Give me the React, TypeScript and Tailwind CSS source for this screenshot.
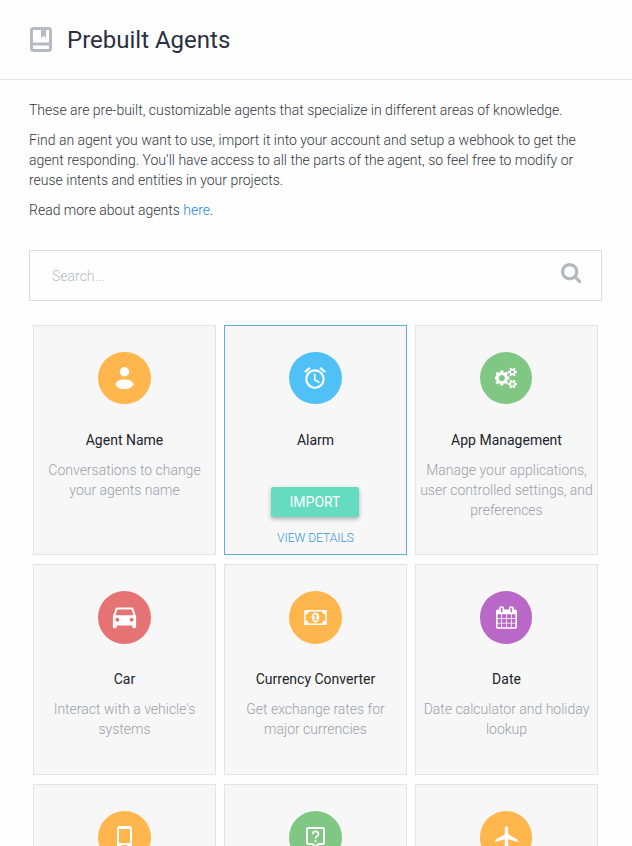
import type { ReactNode } from "react";
import { MdAccessAlarm, MdDirectionsCar, MdLocalAirport } from "react-icons/md";

const cogs =
  "M832 896q0-106-75-181t-181-75-181 75-75 181 75 181 181 75 181-75 75-181zm768 512q0-52-38-90t-90-38-90 38-38 90q0 53 37.5 90.5t90.5 37.5 90.5-37.5 37.5-90.5zm0-1024q0-52-38-90t-90-38-90 38-38 90q0 53 37.5 90.5t90.5 37.5 90.5-37.5 37.5-90.5zm-384 421v185q0 10-7 19.5t-16 10.5l-155 24q-11 35-32 76 34 48 90 115 7 11 7 20 0 12-7 19-23 30-82.5 89.5t-78.5 59.5q-11 0-21-7l-115-90q-37 19-77 31-11 108-23 155-7 24-30 24h-186q-11 0-20-7.5t-10-17.5l-23-153q-34-10-75-31l-118 89q-7 7-20 7-11 0-21-8-144-133-144-160 0-9 7-19 10-14 41-53t47-61q-23-44-35-82l-152-24q-10-1-17-9.5t-7-19.5v-185q0-10 7-19.5t16-10.5l155-24q11-35 32-76-34-48-90-115-7-11-7-20 0-12 7-20 22-30 82-89t79-59q11 0 21 7l115 90q34-18 77-32 11-108 23-154 7-24 30-24h186q11 0 20 7.5t10 17.5l23 153q34 10 75 31l118-89q8-7 20-7 11 0 21 8 144 133 144 160 0 8-7 19-12 16-42 54t-45 60q23 48 34 82l152 23q10 2 17 10.5t7 19.5zm640 533v140q0 16-149 31-12 27-30 52 51 113 51 138 0 4-4 7-122 71-124 71-8 0-46-47t-52-68q-20 2-30 2t-30-2q-14 21-52 68t-46 47q-2 0-124-71-4-3-4-7 0-25 51-138-18-25-30-52-149-15-149-31v-140q0-16 149-31 13-29 30-52-51-113-51-138 0-4 4-7 4-2 35-20t59-34 30-16q8 0 46 46.5t52 67.5q20-2 30-2t30 2q51-71 92-112l6-2q4 0 124 70 4 3 4 7 0 25-51 138 17 23 30 52 149 15 149 31zm0-1024v140q0 16-149 31-12 27-30 52 51 113 51 138 0 4-4 7-122 71-124 71-8 0-46-47t-52-68q-20 2-30 2t-30-2q-14 21-52 68t-46 47q-2 0-124-71-4-3-4-7 0-25 51-138-18-25-30-52-149-15-149-31v-140q0-16 149-31 13-29 30-52-51-113-51-138 0-4 4-7 4-2 35-20t59-34 30-16q8 0 46 46.5t52 67.5q20-2 30-2t30 2q51-71 92-112l6-2q4 0 124 70 4 3 4 7 0 25-51 138 17 23 30 52 149 15 149 31z";
const banknote =
  "M768 1152h384v-96h-128v-448h-114l-148 137 77 80q42-37 55-57h2v288h-128v96zm512-256q0 70-21 142t-59.5 134-101.5 101-138 39-138-39-101.5-101-59.5-134-21-142 21-142 59.5-134 101.5-101 138-39 138 39 101.5 101 59.5 134 21 142zm512 256v-512q-106 0-181-75t-75-181h-1152q0 106-75 181t-181 75v512q106 0 181 75t75 181h1152q0-106 75-181t181-75zm128-832v1152q0 26-19 45t-45 19h-1792q-26 0-45-19t-19-45v-1152q0-26 19-45t45-19h1792q26 0 45 19t19 45z";
const calendar =
  "M192 1664h288v-288h-288v288zm352 0h320v-288h-320v288zm-352-352h288v-320h-288v320zm352 0h320v-320h-320v320zm-352-384h288v-288h-288v288zm736 736h320v-288h-320v288zm-384-736h320v-288h-320v288zm768 736h288v-288h-288v288zm-384-352h320v-320h-320v320zm-352-864v-288q0-13-9.5-22.5t-22.5-9.5h-64q-13 0-22.5 9.5t-9.5 22.5v288q0 13 9.5 22.5t22.5 9.5h64q13 0 22.5-9.5t9.5-22.5zm736 864h288v-320h-288v320zm-384-384h320v-288h-320v288zm384 0h288v-288h-288v288zm32-480v-288q0-13-9.5-22.5t-22.5-9.5h-64q-13 0-22.5 9.5t-9.5 22.5v288q0 13 9.5 22.5t22.5 9.5h64q13 0 22.5-9.5t9.5-22.5zm384-64v1280q0 52-38 90t-90 38h-1408q-52 0-90-38t-38-90v-1280q0-52 38-90t90-38h128v-96q0-66 47-113t113-47h64q66 0 113 47t47 113v96h384v-96q0-66 47-113t113-47h64q66 0 113 47t47 113v96h128q52 0 90 38t38 90z";
const magnifier =
  "M1216 832q0-185-131.5-316.5t-316.5-131.5-316.5 131.5-131.5 316.5 131.5 316.5 316.5 131.5 316.5-131.5 131.5-316.5zm512 832q0 52-38 90t-90 38q-54 0-90-38l-343-342q-179 124-399 124-143 0-273.5-55.5t-225-150-150-225-55.5-273.5 55.5-273.5 150-225 225-150 273.5-55.5 273.5 55.5 225 150 150 225 55.5 273.5q0 220-124 399l343 343q37 37 37 90z";

function Glyph({ d, box, className }: { d: string; box: string; className: string }) {
  return (
    <svg viewBox={box} className={className} fill="currentColor" fillRule="evenodd">
      <path d={d} />
    </svg>
  );
}

type Agent = { name?: string; text?: string; color: string; icon: ReactNode; active?: boolean };
type Row = { height: string; disc: string; agents: Agent[] };

const rows: Row[] = [
  {
    height: "h-[230px]",
    disc: "mb-px h-[52px]",
    agents: [
      {
        name: "Agent Name",
        text: "Conversations to change your agents name",
        color: "bg-[#ffb64d]",
        icon: (
          <svg viewBox="0 0 19 22" className="h-[22px] w-[19px]" fill="currentColor">
            <circle cx="9.500" cy="4.800" r="4.700" />
            <path d="M.300 17.200C1.500 14 5.200 12.600 9.500 12.600s8 1.400 9.200 4.600c-1.200 3.200-4.900 4.800-9.200 4.800s-8-1.600-9.200-4.800z" />
          </svg>
        ),
      },
      { name: "Alarm", color: "bg-[#4fc1f7]", icon: <MdAccessAlarm className="mr-px size-[26px]" />, active: true },
      {
        name: "App Management",
        text: "Manage your applications, user controlled settings, and preferences",
        color: "bg-[#81c784]",
        icon: <Glyph d={cogs} box="0 0 1856 1792" className="h-[22px] w-[22px]" />,
      },
    ],
  },
  {
    height: "h-[211px]",
    disc: "h-[53px]",
    agents: [
      {
        name: "Car",
        text: "Interact with a vehicle's systems",
        color: "bg-[#e57373]",
        icon: <MdDirectionsCar className="mb-[3px] size-[31px]" />,
      },
      {
        name: "Currency Converter",
        text: "Get exchange rates for major currencies",
        color: "bg-[#ffb64d]",
        icon: <Glyph d={banknote} box="0 0 1920 1792" className="h-[21px] w-[23px]" />,
      },
      {
        name: "Date",
        text: "Date calculator and holiday lookup",
        color: "bg-[#ba68c8]",
        icon: <Glyph d={calendar} box="64 0 1664 1792" className="ml-px h-[23px] w-[21px]" />,
      },
    ],
  },
  {
    height: "h-[211px]",
    disc: "h-[53px]",
    agents: [
      {
        color: "bg-[#ffb64d]",
        icon: (
          <svg viewBox="0 0 15 23" className="h-[23px] w-[15px]" fill="currentColor" fillRule="evenodd">
            <path d="M2.500 0h10A2.500 2.500 0 0 1 15 2.500v18a2.500 2.500 0 0 1-2.500 2.500h-10A2.500 2.500 0 0 1 0 20.500v-18A2.500 2.500 0 0 1 2.500 0zM2 3v14h11V3zm3 16v1.500h5V19z" />
          </svg>
        ),
      },
      {
        color: "bg-[#81c784]",
        icon: (
          <svg viewBox="0 0 19 21" className="h-[21px] w-[19px]" fill="none" stroke="currentColor" strokeWidth="2">
            <path d="M2 1h15a1 1 0 0 1 1 1v14a1 1 0 0 1-1 1h-4.500l-3 3-3-3H2a1 1 0 0 1-1-1V2a1 1 0 0 1 1-1z" />
            <path d="M6.700 7.200c0-3.700 5.700-3.700 5.700-.300 0 2.100-2.900 2.200-2.900 4.900M9.500 13.200v2" strokeWidth="1.700" />
          </svg>
        ),
      },
      { color: "bg-[#ffb64d]", icon: <MdLocalAirport className="size-[27px]" /> },
    ],
  },
];

function Card({ agent, row, last }: { agent: Agent; row: Row; last: boolean }) {
  return (
    <div
      className={`flex w-[183px] shrink-0 flex-col items-center border bg-[#f7f7f7] pt-[26px] text-center text-sm leading-5 ${row.height} ${
        agent.active ? "border-[#5fade2]" : "border-[#e4e4e5]"
      }`}
    >
      <div
        className={`flex shrink-0 items-center justify-center rounded-full text-white ${row.disc} ${last ? "mr-px w-[52px]" : "w-[53px]"} ${agent.color}`}
      >
        {agent.icon}
      </div>
      {agent.name && <h2 className="mt-[25px] text-[#20232a]">{agent.name}</h2>}
      {agent.text && <p className="mt-2.5 px-1 font-light text-[#9b9fab]">{agent.text}</p>}
      {agent.active && (
        <>
          <button className="mt-[37px] mr-px h-[30px] w-[88px] rounded-xs bg-[#65dbbf] leading-[30px] text-white shadow-[0_2px_4px_rgba(0,0,0,0.3)]">
            IMPORT
          </button>
          <a className="mt-[11px] text-xs leading-5 font-light text-[#2e96dc]">VIEW DETAILS</a>
        </>
      )}
    </div>
  );
}

export default function App() {
  return (
    <div className="h-[846px] w-[632px] overflow-hidden bg-[#fefefe] font-['Roboto',sans-serif] text-sm leading-5">
      <header className="flex h-20 items-center border-b border-[#e4e4e5] pl-[30px]">
        <svg viewBox="0 0 22 25" className="h-[25px] w-[22px] text-[#b6bac5]" fill="currentColor" fillRule="evenodd">
          <path d="M3.500 0h15A3.500 3.500 0 0 1 22 3.500v18a3.500 3.500 0 0 1-3.500 3.500h-15A3.500 3.500 0 0 1 0 21.500v-18A3.500 3.500 0 0 1 3.500 0zM3 3v12.500h16V3h-3v8l-2.500-2-2.500 2V3zm0 15.500V21c0 .600.400 1 1 1h14c.600 0 1-.400 1-1v-2.500z" />
        </svg>
        <h1 className="ml-[15px] text-2xl text-[#2b303f]">Prebuilt Agents</h1>
      </header>
      <main className="px-[29px] pt-5">
        <div className="flex flex-col gap-2.5 font-light text-[#34363c]">
          <p>These are pre-built, customizable agents that specialize in different areas of knowledge.</p>
          <p>
            Find an agent you want to use, import it into your account and setup a webhook to get the agent responding. You’ll have access to
            all the parts of the agent, so feel free to modify or reuse intents and entities in your projects.
          </p>
          <p>
            Read more about agents <a className="text-[#1a8cdb]">here</a>.
          </p>
        </div>
        <div className="mt-[30px] flex h-[51px] w-[573px] items-center justify-between border border-[#dcdcdf] bg-[#fefefe] pr-5 pl-[22px]">
          <span className="font-light text-[#b8bbc4]">Search...</span>
          <Glyph d={magnifier} box="64 128 1664 1664" className="mb-[5px] size-[20.5px] text-[#b2b7c2]" />
        </div>
        <div className="mt-6 ml-1 flex flex-col gap-[9px]">
          {rows.map((row, i) => (
            <div key={i} className="flex gap-2">
              {row.agents.map((agent, j) => (
                <Card key={j} agent={agent} row={row} last={j === 2} />
              ))}
            </div>
          ))}
        </div>
      </main>
    </div>
  );
}
